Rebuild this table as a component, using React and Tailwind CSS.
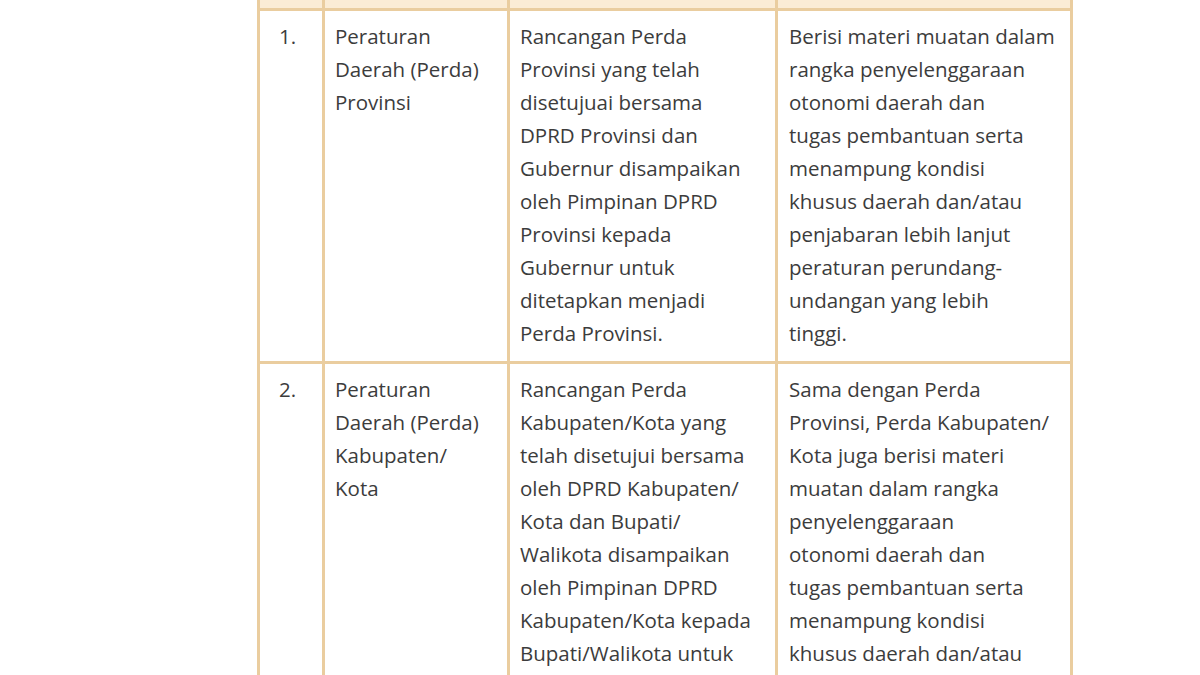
import React from "react";

const rows = [
  {
    no: "1.",
    name: ["Peraturan", "Daerah (Perda)", "Provinsi"],
    proc: [
      "Rancangan Perda",
      "Provinsi yang telah",
      "disetujuai bersama",
      "DPRD Provinsi dan",
      "Gubernur disampaikan",
      "oleh Pimpinan DPRD",
      "Provinsi kepada",
      "Gubernur untuk",
      "ditetapkan menjadi",
      "Perda Provinsi.",
    ],
    desc: [
      "Berisi materi muatan dalam",
      "rangka penyelenggaraan",
      "otonomi daerah dan",
      "tugas pembantuan serta",
      "menampung kondisi",
      "khusus daerah dan/atau",
      "penjabaran lebih lanjut",
      "peraturan perundang-",
      "undangan yang lebih",
      "tinggi.",
    ],
  },
  {
    no: "2.",
    name: ["Peraturan", "Daerah (Perda)", "Kabupaten/", "Kota"],
    proc: [
      "Rancangan Perda",
      "Kabupaten/Kota yang",
      "telah disetujui bersama",
      "oleh DPRD Kabupaten/",
      "Kota dan Bupati/",
      "Walikota disampaikan",
      "oleh Pimpinan DPRD",
      "Kabupaten/Kota kepada",
      "Bupati/Walikota untuk",
    ],
    desc: [
      "Sama dengan Perda",
      "Provinsi, Perda Kabupaten/",
      "Kota juga berisi materi",
      "muatan dalam rangka",
      "penyelenggaraan",
      "otonomi daerah dan",
      "tugas pembantuan serta",
      "menampung kondisi",
      "khusus daerah dan/atau",
    ],
  },
];

function Lines({ lines }) {
  return (
    <div className="flex flex-col">
      {lines.map((l, i) => (
        <span key={i} className="whitespace-nowrap">
          {l}
        </span>
      ))}
    </div>
  );
}

export default function App() {
  return (
    <div className="w-[1200px] h-[675px] overflow-hidden bg-white">
      <div
        className="pl-[257px] text-[20.5px] leading-[33px] text-[#3c3c3c]"
        style={{ fontFamily: '"Open Sans", "Noto Sans", sans-serif' }}
      >
        <table className="border-collapse w-[813px] table-fixed">
          <colgroup>
            <col className="w-[65px]" />
            <col className="w-[185px]" />
            <col className="w-[268px]" />
            <col className="w-[295px]" />
          </colgroup>
          <thead>
            <tr className="h-[9px] bg-[#fbecd5]">
              <th className="border-[3px] border-t-0 border-[#eacd9f] p-0"></th>
              <th className="border-[3px] border-t-0 border-[#eacd9f] p-0"></th>
              <th className="border-[3px] border-t-0 border-[#eacd9f] p-0"></th>
              <th className="border-[3px] border-t-0 border-[#eacd9f] p-0"></th>
            </tr>
          </thead>
          <tbody>
            {rows.map((r, idx) => {
              const pb = idx === 1 ? "pb-[60px]" : "pb-[11px]";
              return (
                <tr key={r.no}>
                  <td className={`border-[3px] border-[#eacd9f] align-top pl-[19px] pt-[9px] ${pb}`}>
                    {r.no}
                  </td>
                  <td className={`border-[3px] border-[#eacd9f] align-top pl-[10px] pt-[9px] ${pb}`}>
                    <Lines lines={r.name} />
                  </td>
                  <td className={`border-[3px] border-[#eacd9f] align-top pl-[10px] pt-[9px] ${pb}`}>
                    <Lines lines={r.proc} />
                  </td>
                  <td className={`border-[3px] border-[#eacd9f] align-top pl-[11px] pt-[9px] ${pb}`}>
                    <Lines lines={r.desc} />
                  </td>
                </tr>
              );
            })}
          </tbody>
        </table>
      </div>
    </div>
  );
}
